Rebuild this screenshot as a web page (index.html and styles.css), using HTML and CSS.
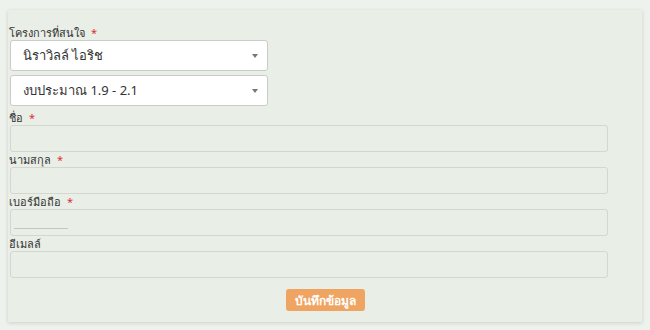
FILE: index.html
```html
<!DOCTYPE html>
<html lang="th">
<head>
  <meta charset="UTF-8">
  <meta name="viewport" content="width=device-width, initial-scale=1.0">
  <title>ลงทะเบียน</title>
  <link rel="stylesheet" href="styles.css">
</head>
<body>
  <div class="card">
    <form class="reg-form">
      <label class="label">โครงการที่สนใจ <span class="req">*</span></label>
      <div class="select-box">
        <span>นิราวิลล์ ไอริช</span>
        <span class="caret"></span>
      </div>
      <div class="select-box">
        <span>งบประมาณ 1.9 - 2.1</span>
        <span class="caret"></span>
      </div>

      <label class="label">ชื่อ <span class="req">*</span></label>
      <input type="text" class="field">

      <label class="label">นามสกุล <span class="req">*</span></label>
      <input type="text" class="field">

      <label class="label">เบอร์มือถือ <span class="req">*</span></label>
      <div class="field-wrap">
        <input type="text" class="field">
        <span class="underline"></span>
      </div>

      <label class="label">อีเมลล์</label>
      <input type="text" class="field">

      <div class="actions">
        <button type="button" class="save-btn">บันทึกข้อมูล</button>
      </div>
    </form>
  </div>
</body>
</html>
```

FILE: styles.css
```css
body {
  font-family: "Noto Sans", "DejaVu Sans", sans-serif;
  margin: 0;
  padding: 10px 8px 8px 8px;
  background-color: #eef2ec;
}

.card {
  background-color: #e9eee7;
  box-shadow: 0 1px 4px rgba(0, 0, 0, 0.15);
  height: 312px;
  box-sizing: border-box;
  padding: 15px 0 0 1px;
}

.reg-form {
  display: flex;
  flex-direction: column;
}

.label {
  font-size: 11px;
  line-height: 15px;
  color: #333;
  height: 15px;
}

.req {
  color: #e03030;
  margin-left: 3px;
}

.select-box {
  width: 258px;
  height: 31px;
  margin-left: 1px;
  margin-bottom: 4px;
  box-sizing: border-box;
  background-color: #fff;
  border: 1px solid #c9ccc8;
  border-radius: 3px;
  display: flex;
  align-items: center;
  justify-content: space-between;
  padding: 0 9px 0 12px;
  font-size: 13px;
  color: #333;
}

.caret {
  width: 0;
  height: 0;
  border-left: 3px solid transparent;
  border-right: 3px solid transparent;
  border-top: 4px solid #777;
}

.field {
  display: block;
  width: 598px;
  height: 27px;
  margin: 0 0 0 1px;
  box-sizing: border-box;
  background-color: transparent;
  border: 1px solid #d3d6d1;
  border-radius: 3px;
}

.field-wrap {
  position: relative;
}

.underline {
  position: absolute;
  left: 5px;
  top: 19px;
  width: 54px;
  height: 1px;
  background-color: #c4c6c3;
}

.actions {
  display: flex;
  justify-content: center;
  padding-top: 11px;
}

.save-btn {
  background-color: #f0a462;
  color: #fff;
  border: none;
  border-radius: 3px;
  height: 22px;
  width: 79px;
  font-family: inherit;
  font-size: 12px;
  font-weight: bold;
  padding: 0;
}
```
